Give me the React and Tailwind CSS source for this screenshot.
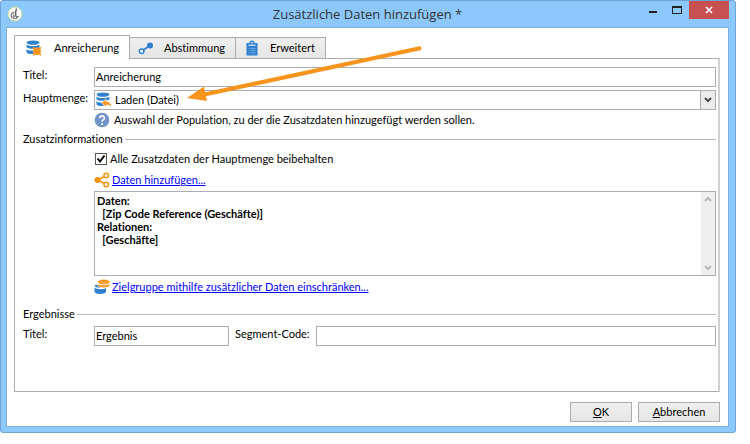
import { useState } from "react";

const inputClass = "h-5 min-w-0 rounded-none border border-[#abadb3] bg-white px-px pb-0.5 outline-none";

const StackIcon = ({ children }) => (
    <svg width="16" height="16" viewBox="0 0 16 16" aria-hidden="true">
        <g fill="#2f80cf">
            <ellipse cx="7" cy="2.6" rx="6.500" ry="2.200" />
            <path d="M.5 4.800c2.500 1.700 10.500 1.700 13 0v2.400c-2.500 2-10.500 2-13 0z" />
            <path d="M.5 9.200c2 1.300 4.500 1.500 7 1.400V14C4.500 14.200 2 13.600.5 12.400z" />
        </g>
        {children}
    </svg>
);

const EnrichmentIcon = () => (
    <StackIcon>
        <path
            d="M6.500 6.800l3 1.300 1.500-1 1.500 1 3-1.300-1.200 3 .9 1.400-.9 1.500 1.200 3.200-3-1.300-1.500 1-1.500-1-3 1.300 1.200-3.200-.9-1.500.9-1.400z"
            fill="#f7941d"
        />
    </StackIcon>
);

const SourceIcon = () => (
    <StackIcon>
        <path d="M5.500 11l4.500-4v2.500c3.500 0 5.500 2 5.500 6-1.200-2-3-2.600-5.500-2.500v2z" fill="#f7941d" stroke="#fff" strokeWidth=".6" />
    </StackIcon>
);

const ReconciliationIcon = () => (
    <svg width="16" height="16" viewBox="0 0 16 16" aria-hidden="true">
        <path d="M4 11l8-5.500" stroke="#2f80cf" strokeWidth="1.600" />
        <circle cx="3.600" cy="11.200" r="2.300" fill="#fff" stroke="#2f80cf" strokeWidth="1.500" />
        <circle cx="12" cy="5.500" r="3" fill="#2f80cf" />
    </svg>
);

const ClipboardIcon = () => (
    <svg width="16" height="16" viewBox="0 0 16 16" aria-hidden="true">
        <path d="M2.500 3h3a2.500 2.500 0 0 1 5 0h3v12.500h-11z" fill="#2f80cf" />
        <circle cx="8" cy="2.800" r=".8" fill="#fff" />
        <path d="M4.500 5.200h7" stroke="#fff" />
        <path d="M4.500 8.500h1M6.500 8.500h5M4.500 10.700h1M6.500 10.700h5M4.500 12.900h1M6.500 12.900h5" stroke="#8fbce6" strokeWidth=".7" />
    </svg>
);

const ShareIcon = () => (
    <svg width="16" height="16" viewBox="0 0 16 16" aria-hidden="true">
        <path d="M12 3.500L4 8l8 4.500" fill="none" stroke="#f0930f" strokeWidth="1.600" />
        <circle cx="3.500" cy="8" r="3" fill="#f0930f" />
        <circle cx="12.200" cy="3.500" r="2.300" fill="#fff" stroke="#f0930f" strokeWidth="1.500" />
        <circle cx="12.200" cy="12.500" r="2.300" fill="#fff" stroke="#f0930f" strokeWidth="1.500" />
    </svg>
);

const RestrictIcon = () => (
    <svg width="16" height="16" viewBox="0 0 16 16" aria-hidden="true">
        <path d="M.5 8.500c1.500 1.800 8.500 2.200 11.500.8v3.700c-1 2.600-10.500 2.600-11.500 0z" fill="#2f80cf" />
        <path d="M.5 7c.6-1 1.500-1.500 2.500-1.600.5 1.600 2 2.700 4 3.200C4 9 1.500 8.300.5 7z" fill="#2f80cf" />
        <path d="M4 4.800c1.500 2 9.500 2 11.500 0v1.700c-1.500 2.600-10 2.600-11.500 0z" fill="#f7941d" />
        <ellipse cx="9.800" cy="3" rx="5.800" ry="2.600" fill="#f7941d" />
        <path d="M6 3c1.500 1.200 6 1.200 7.600 0" fill="none" stroke="#fbc47f" strokeWidth=".8" />
    </svg>
);

const HelpIcon = () => (
    <svg width="16" height="16" viewBox="0 0 16 16" aria-hidden="true">
        <circle cx="8" cy="8" r="7.300" fill="#7191c9" />
        <path d="M5.700 6.200c0-3.200 4.800-3 4.800-.3 0 1.800-2.400 1.800-2.400 3.800" fill="none" stroke="#fff" strokeWidth="1.600" />
        <circle cx="8.100" cy="12" r="1.100" fill="#fff" />
    </svg>
);

const AppIcon = () => (
    <svg width="16" height="16" viewBox="0 0 16 16" aria-hidden="true">
        <circle cx="8" cy="8" r="7" fill="#fff" stroke="#b9d978" strokeWidth=".8" />
        <path d="M9.500 2.500c-.8 2-1 4-.7 7 .2 1.700 1.500 2 2.700.8" fill="none" stroke="#555" strokeWidth="1.300" />
        <path d="M7.500 6C5 6 4 8 4.300 10.500c.5 1.500 2.500 1 4-1.200M5.500 11.500c1 1.500 3.500 1.300 5 .3" fill="none" stroke="#777" strokeWidth="1.200" />
        <path d="M6.700 6.500v4.500" stroke="#999" />
    </svg>
);

const Chevron = ({ up, className }) => (
    <svg width="8" height="6" viewBox="0 0 8 6" className={className} aria-hidden="true">
        <path d={up ? "M1 5l3-3.200L7 5" : "M1 1l3 3.200L7 1"} fill="none" stroke="currentColor" strokeWidth="1.900" />
    </svg>
);

const tabs = [
    { id: "anreicherung", label: "Anreicherung", icon: EnrichmentIcon },
    { id: "abstimmung", label: "Abstimmung", icon: ReconciliationIcon },
    { id: "erweitert", label: "Erweitert", icon: ClipboardIcon },
];

const TitleBar = () => (
    <header className="grid h-[26px] grid-cols-[1fr_auto_1fr] items-start">
        <div className="pt-[5px] pl-px">
            <AppIcon />
        </div>
        <h1 className="font-['Open_Sans','Noto_Sans',sans-serif] text-[13px] leading-[26px] text-[#333]">
            Zusätzliche Daten hinzufügen *
        </h1>
        <div className="flex justify-end">
            <button aria-label="Minimieren" className="flex h-[18px] w-6 items-center justify-center">
                <span className="mt-1 h-0.5 w-2 bg-[#222]" />
            </button>
            <button aria-label="Maximieren" className="flex h-[18px] w-6 items-center justify-center">
                <span className="h-2 w-[10px] border border-t-2 border-[#222]" />
            </button>
            <button aria-label="Schließen" className="flex h-[18px] w-10 items-center justify-center bg-[#c75050]">
                <svg width="8" height="8" viewBox="0 0 8 8" aria-hidden="true">
                    <path d="M1 1l6 6M7 1L1 7" stroke="#fff" strokeWidth="1.700" />
                </svg>
            </button>
        </div>
    </header>
);

const GroupTitle = ({ children }) => (
    <div className="flex h-5 items-center gap-0.5">
        <h2>{children}</h2>
        <div className="h-px flex-1 bg-[#b8b8b8]" />
    </div>
);

const App = () => {
    const [activeTab, setActiveTab] = useState("anreicherung");

    return (
        <div className="pr-3.5 font-['Lato','Open_Sans',sans-serif] text-[11px] leading-4 text-black [font-variant-ligatures:none]">
            <div className="relative rounded-[3px] border border-[#6fa3d3] bg-[#8cc8fb] pr-1.5 pb-[5px] pl-[5px]">
                <TitleBar />
                <main className="border border-[#7fb0dd] bg-white pt-[7px] pr-2 pb-1 pl-[7px]">
                    <div role="tablist" className="flex items-end">
                        {tabs.map(({ id, label, icon: Icon }) => (
                            <button
                                key={id}
                                role="tab"
                                aria-selected={activeTab === id}
                                onClick={() => setActiveTab(id)}
                                className={
                                    activeTab === id
                                        ? "relative -mb-px flex h-6 items-center gap-3 border border-b-0 border-[#acacac] bg-white pr-2.5 pl-[11px]"
                                        : "flex h-[21px] items-center gap-2.5 border border-b-0 border-l-0 border-[#acacac] bg-gradient-to-b from-[#f0f0f0] to-[#e5e5e5] pr-2.5 pl-2"
                                }
                            >
                                <Icon />
                                <span>{label}</span>
                            </button>
                        ))}
                    </div>

                    <section role="tabpanel" className="border border-r-2 border-[#acacac] border-r-[#d0d0d0] pt-2 pr-0.5 pb-[45px] pl-2">
                        <div className="grid grid-cols-[71px_1fr] gap-y-[3px]">
                            <label htmlFor="titel" className="leading-4">Titel:</label>
                            <input id="titel" className={inputClass} defaultValue="Anreicherung" />
                            <label htmlFor="hauptmenge" className="leading-4">Hauptmenge:</label>
                            <div className="relative flex">
                                <select id="hauptmenge" className="h-5 w-full appearance-none rounded-none border border-[#abadb3] bg-white pl-5 leading-4">
                                    <option>Laden (Datei)</option>
                                </select>
                                <span className="pointer-events-none absolute top-0.5 left-0.5">
                                    <SourceIcon />
                                </span>
                                <span className="pointer-events-none absolute inset-y-0 right-0 flex w-4 items-center justify-center border border-[#abadb3] bg-[#ececec] text-[#444]">
                                    <Chevron />
                                </span>
                            </div>
                        </div>

                        <p className="flex h-[19px] items-center gap-1 pl-[71px]">
                            <HelpIcon />
                            Auswahl der Population, zu der die Zusatzdaten hinzugefügt werden sollen.
                        </p>

                        <GroupTitle>Zusatzinformationen</GroupTitle>
                        <div className="pl-[71px]">
                            <label className="flex h-5 items-center gap-[3px] pl-px">
                                <span className="relative flex">
                                    <input type="checkbox" defaultChecked className="peer size-3 appearance-none border border-[#555] bg-white" />
                                    <svg width="12" height="12" viewBox="0 0 12 12" className="pointer-events-none absolute inset-0 hidden peer-checked:block" aria-hidden="true">
                                        <path d="M2.500 5.500l2.500 3 4.500-6" fill="none" stroke="#000" strokeWidth="1.900" />
                                    </svg>
                                </span>
                                Alle Zusatzdaten der Hauptmenge beibehalten
                            </label>
                            <div className="flex h-[22px] items-center gap-0.5">
                                <ShareIcon />
                                <a href="#daten" className="text-[#0000ff] underline">Daten hinzufügen...</a>
                            </div>
                            <div className="flex h-[85px] border border-[#abadb3]">
                                <textarea
                                    aria-label="Zusatzdaten"
                                    className="min-w-0 flex-1 resize-none overflow-hidden px-0.5 pt-0.5 text-[11px] leading-[13px] font-bold outline-none"
                                    defaultValue={"Daten:\n  [Zip Code Reference (Geschäfte)]\nRelationen:\n  [Geschäfte]"}
                                />
                                <div className="flex w-3.5 flex-col items-center justify-between bg-[#efefef] py-1 text-[#b5b5b5]">
                                    <Chevron up />
                                    <Chevron />
                                </div>
                            </div>
                            <div className="flex h-[22px] items-center gap-0.5">
                                <RestrictIcon />
                                <a href="#zielgruppe" className="text-[#0000ff] underline">
                                    Zielgruppe mithilfe zusätzlicher Daten einschränken...
                                </a>
                            </div>
                        </div>

                        <div className="mt-1.5">
                            <GroupTitle>Ergebnisse</GroupTitle>
                            <div className="mt-0.5 grid grid-cols-[71px_135px_auto_1fr]">
                                <label htmlFor="ergebnis">Titel:</label>
                                <input id="ergebnis" className={inputClass} defaultValue="Ergebnis" />
                                <label htmlFor="segment" className="px-1.5">Segment-Code:</label>
                                <input id="segment" className={inputClass} />
                            </div>
                        </div>
                    </section>

                    <footer className="mt-2.5 flex justify-end gap-1.5">
                        <button className="h-5 w-[62px] border border-[#acacac] bg-gradient-to-b from-[#f0f0f0] to-[#e5e5e5]">
                            <u>O</u>K
                        </button>
                        <button className="h-5 w-[82px] border border-[#acacac] bg-gradient-to-b from-[#f0f0f0] to-[#e5e5e5]">
                            <u>A</u>bbrechen
                        </button>
                    </footer>
                </main>

                <svg width="236" height="60" viewBox="0 0 236 60" className="pointer-events-none absolute top-[43px] left-[185px]" aria-hidden="true">
                    <path d="M235 4L16 51" stroke="#f7941d" strokeWidth="4" />
                    <path d="M1 54l17-11.500 3 14.500z" fill="#f7941d" />
                </svg>
            </div>
        </div>
    );
};

export default App;
